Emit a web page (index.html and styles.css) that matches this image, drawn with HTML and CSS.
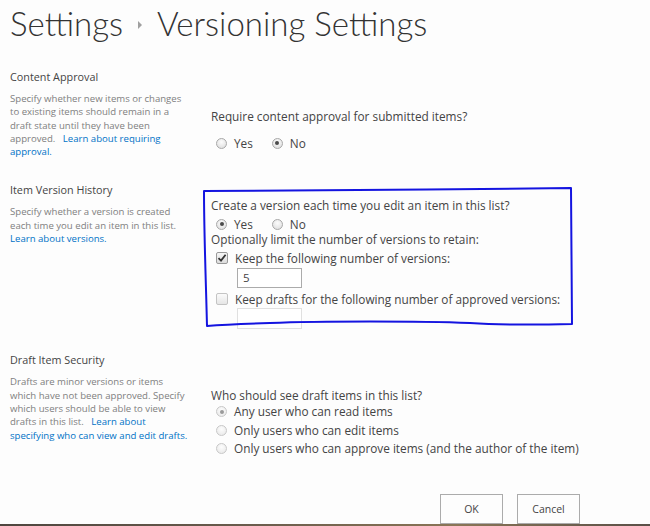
FILE: index.html
```html
<!DOCTYPE html>
<html>
<head>
<meta charset="utf-8">
<link rel="stylesheet" href="styles.css">
</head>
<body>
<div class="page">
  <h1 class="title">
    <span>Settings</span>
    <span class="crumb-arrow"></span>
    <span>Versioning Settings</span>
  </h1>

  <div class="section s-approval">
    <div class="info">
      <h3 class="sec-head">Content Approval</h3>
      <p class="desc">Specify whether new items or changes<br>to existing items should remain in a<br>draft state until they have been<br>approved. &nbsp; <a href="#">Learn about requiring<br>approval.</a></p>
    </div>
    <div class="control">
      <div class="question">Require content approval for submitted items?</div>
      <div class="radio-row">
        <label class="opt"><span class="radio"></span>Yes</label>
        <label class="opt"><span class="radio on"></span>No</label>
      </div>
    </div>
  </div>

  <div class="section s-version">
    <div class="info">
      <h3 class="sec-head">Item Version History</h3>
      <p class="desc">Specify whether a version is created<br>each time you edit an item in this list.<br><a href="#">Learn about versions.</a></p>
    </div>
    <div class="control">
      <svg class="annot" width="380" height="150" viewBox="0 0 380 150">
        <path d="M4 7 C 120 6, 250 6, 371 4 L 372 140 C 330 141, 300 141, 270 139 C 220 137, 120 137, 70 139 C 40 140, 20 141, 7 142 C 6 100, 4 50, 4 7 Z" fill="none" stroke="#1414e0" stroke-width="2" stroke-linejoin="round"/>
      </svg>
      <div class="question">Create a version each time you edit an item in this list?</div>
      <div class="radio-row">
        <label class="opt"><span class="radio on"></span>Yes</label>
        <label class="opt"><span class="radio"></span>No</label>
      </div>
      <div class="question">Optionally limit the number of versions to retain:</div>
      <label class="opt check-row"><span class="check on"><svg width="10" height="10" viewBox="0 0 10 10"><path d="M1.5 5.2 L4 7.6 L8.6 1.8" fill="none" stroke="#333" stroke-width="1.8"/></svg></span>Keep the following number of versions:</label>
      <div class="num-box">5</div>
      <label class="opt check-row"><span class="check"></span>Keep drafts for the following number of approved versions:</label>
      <div class="num-box disabled"></div>
    </div>
  </div>

  <div class="section s-draft">
    <div class="info">
      <h3 class="sec-head">Draft Item Security</h3>
      <p class="desc">Drafts are minor versions or items<br>which have not been approved. Specify<br>which users should be able to view<br>drafts in this list. &nbsp; <a href="#">Learn about<br>specifying who can view and edit drafts.</a></p>
    </div>
    <div class="control">
      <div class="question">Who should see draft items in this list?</div>
      <div class="radio-list">
        <label class="opt"><span class="radio dim on"></span>Any user who can read items</label>
        <label class="opt"><span class="radio dim"></span>Only users who can edit items</label>
        <label class="opt"><span class="radio dim"></span>Only users who can approve items (and the author of the item)</label>
      </div>
    </div>
  </div>

  <div class="buttons">
    <button class="btn">OK</button>
    <button class="btn">Cancel</button>
  </div>
</div>
<div class="taskbar"></div>
</body>
</html>
```
FILE: styles.css
```css
html, body {
  margin: 0;
  padding: 0;
  background: #fdfdfd;
  overflow: hidden;
}
body {
  font-family: "Open Sans", "Noto Sans", sans-serif;
  color: #444;
  height: 526px;
  display: flex;
  flex-direction: column;
}
.page {
  padding-left: 10px;
  flex: 1;
}
.title {
  margin: 0;
  padding-top: 3px;
  height: 40px;
  font-family: "Lato", "Open Sans", sans-serif;
  font-weight: 300;
  font-size: 33px;
  line-height: 40px;
  color: #333;
  display: flex;
  align-items: center;
  gap: 15px;
  white-space: nowrap;
}
.crumb-arrow {
  width: 0;
  height: 0;
  border-top: 4px solid transparent;
  border-bottom: 4px solid transparent;
  border-left: 4px solid #a0a0a0;
  margin-top: 4px;
}
.section {
  display: grid;
  grid-template-columns: 201px 1fr;
}
.s-approval { margin-top: 27px; }
.s-version { margin-top: 25px; }
.s-draft { margin-top: 24px; }
.sec-head {
  margin: 0;
  font-size: 10.8px;
  font-weight: 400;
  line-height: 14px;
  color: #444;
}
.desc {
  margin: 8px 0 0;
  font-size: 9.6px;
  line-height: 13.3px;
  color: #808080;
  white-space: nowrap;
}
.desc a {
  color: #0072c6;
  text-decoration: none;
}
.control {
  position: relative;
  font-size: 11.8px;
  color: #444;
}
.s-approval .control { padding-top: 39px; }
.s-version .control { padding-top: 15px; }
.s-draft .control { padding-top: 35px; }
.question {
  height: 15px;
  line-height: 15px;
  white-space: nowrap;
}
.radio-row {
  display: flex;
  gap: 19px;
  height: 16px;
  margin: 3px 0 0 5px;
}
.s-approval .radio-row { margin-top: 11px; }
.opt {
  display: flex;
  align-items: center;
  gap: 7px;
  height: 16px;
  line-height: 16px;
  white-space: nowrap;
}
.radio {
  width: 11px;
  height: 11px;
  box-sizing: border-box;
  border-radius: 50%;
  border: 1px solid #a8a8a8;
  background: radial-gradient(circle at 50% 35%, #fcfcfc, #dadada);
  display: inline-flex;
  align-items: center;
  justify-content: center;
  flex: none;
}
.radio.on::after {
  content: "";
  width: 4px;
  height: 4px;
  border-radius: 50%;
  background: #4a4a4a;
}
.radio.dim {
  border-color: #c8c8c8;
  background: radial-gradient(circle at 50% 35%, #fdfdfd, #e6e6e6);
}
.radio.dim.on::after {
  background: #9a9a9a;
}
.check-row {
  margin-left: 5px;
  margin-top: 3px;
}
.check {
  width: 12px;
  height: 12px;
  box-sizing: border-box;
  border: 1px solid #c4c4c4;
  border-radius: 2px;
  background: linear-gradient(#fbfbfb, #e6e6e6);
  display: inline-flex;
  align-items: center;
  justify-content: center;
  flex: none;
}
.check.on {
  border-color: #999;
  background: linear-gradient(#f6f6f6, #dcdcdc);
}
.num-box {
  margin: 2px 0 0 26px;
  width: 65px;
  height: 20px;
  box-sizing: border-box;
  border: 1px solid #ababab;
  background: #fff;
  font-size: 11.5px;
  line-height: 18px;
  padding-left: 5px;
}
.num-box.disabled {
  border-color: #e0e0e0;
  height: 21px;
  margin-top: 1px;
}
.annot {
  position: absolute;
  left: -11px;
  top: 1px;
  overflow: visible;
  pointer-events: none;
}
.radio-list {
  margin: -1px 0 0 5px;
  display: flex;
  flex-direction: column;
}
.radio-list .opt {
  height: 18.5px;
  line-height: 18.5px;
}
.buttons {
  display: flex;
  justify-content: flex-end;
  gap: 14px;
  width: 570px;
  margin-top: 36px;
}
.btn {
  width: 63px;
  height: 30px;
  box-sizing: border-box;
  border: 1px solid #ababab;
  background: #fdfdfd;
  font-family: "Open Sans", sans-serif;
  font-size: 10.5px;
  color: #444;
  padding: 0;
}
.taskbar {
  height: 2px;
  background: linear-gradient(90deg, #4e463f, #6b5d4d 40%, #8a7556 70%, #5a5048);
  flex: none;
}
```
